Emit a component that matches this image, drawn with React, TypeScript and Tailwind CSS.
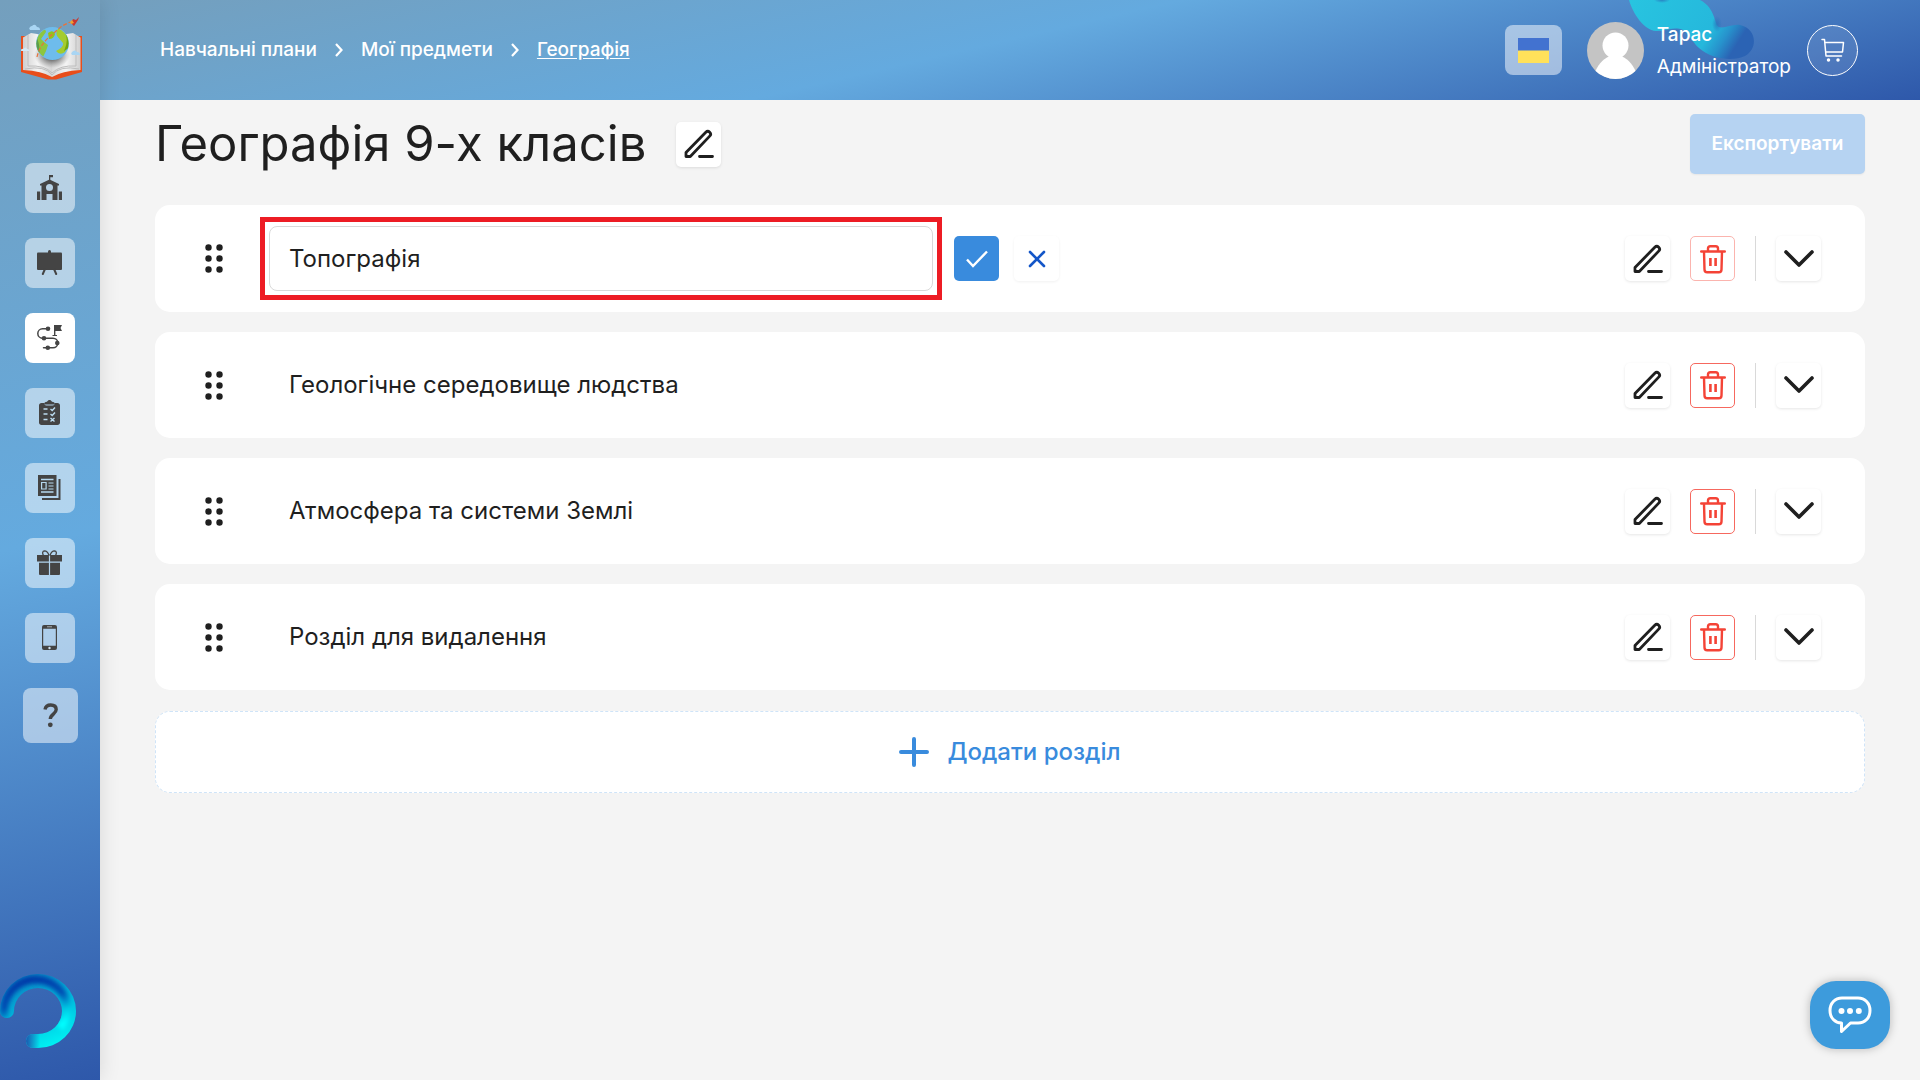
import { ReactNode, useState } from "react"
import clsx from "clsx"

type Section = { id: number; title: string }

const SECTIONS: Section[] = [
  { id: 1, title: "Топографія" },
  { id: 2, title: "Геологічне середовище людства" },
  { id: 3, title: "Атмосфера та системи Землі" },
  { id: 4, title: "Розділ для видалення" },
]

const SchoolIcon = () => (
  <svg viewBox="0 0 25 25" className="size-[25px]" fill="currentColor">
    <path d="M12 5V0h4v2.200h-2.700V5z" />
    <path
      fillRule="evenodd"
      d="M12.500 4.500 22 9v1.500h-1.500V25h-5v-6h-6v6h-5V10.500H3V9zM12.500 9a3.500 3.500 0 1 0 0 7 3.500 3.500 0 0 0 0-7z"
    />
    <path d="M0 16.500h3.200V25H0zM21.800 16.500H25V25h-3.200z" />
  </svg>
)

const BoardIcon = () => (
  <svg viewBox="0 0 25 25" className="size-[25px]" fill="currentColor">
    <rect x="11" y="0" width="3" height="5" rx="1.500" />
    <rect x="0" y="2.500" width="25" height="17.500" rx="1" />
    <path d="M8 19 5.800 24M17 19l2.200 5" stroke="currentColor" strokeWidth="2" strokeLinecap="round" />
  </svg>
)

const PathIcon = () => (
  <svg viewBox="0 0 25 25" className="size-[25px]" fill="currentColor">
    <path
      d="M11 3.800H5.500a4.600 4.600 0 0 0 0 9.400H16a4.800 4.800 0 0 1 0 9.600H6.500"
      fill="none"
      stroke="currentColor"
      strokeWidth="1.500"
      strokeLinecap="round"
    />
    <circle cx="11" cy="3.800" r="2.300" />
    <circle cx="7" cy="13.200" r="2.300" />
    <circle cx="20.300" cy="18" r="2.300" />
    <circle cx="10.800" cy="22.700" r="2.300" />
    <path d="M17 0h8l-1.500 3L25 6h-6.600v4h1.600v1h-4.500v-1H17z" />
  </svg>
)

const ClipboardIcon = () => (
  <svg viewBox="0 0 25 25" className="size-[25px]" fill="currentColor">
    <path d="M4.500 3h2.700c0 1.700.8 2.500 2.300 2.500h6c1.500 0 2.300-.8 2.300-2.500h2.700c1.400 0 2.500 1 2.500 2.500v17c0 1.500-1 2.500-2.500 2.500h-16C3 25 2 24 2 22.500v-17C2 4 3 3 4.500 3z" />
    <path d="M7 4.500c0-1.500 1-2.500 3-2.700C10.700.600 11.500 0 12.500 0s1.800.6 2.500 1.800c2 .2 3 1.200 3 2.700z" />
    <path
      d="M6.500 9h4M6.500 14h4M6.500 19.500h4M13.500 9l1.700 1.500L18 7.500M13.500 14l1.700 1.500 2.800-3M13.500 18l4 3.500m0-3.500-4 3.500"
      fill="none"
      stroke="#bcdcf0"
      strokeWidth="1.400"
    />
  </svg>
)

const NewsIcon = () => (
  <svg viewBox="0 0 25 25" className="size-[25px]">
    <path fill="currentColor" d="M1 0h18.500v21H1z" />
    <path d="M22.500 4v20H5" fill="none" stroke="currentColor" strokeWidth="2" />
    <path d="M4 4.500h12.500M4 17h12.500" stroke="#b5d7ee" strokeWidth="1.400" />
    <path d="M4.600 7.500h4.500v6.500H4.600zM11.500 8h5M11.500 11h5M11.500 14h5" fill="none" stroke="#b5d7ee" strokeWidth="1.200" />
  </svg>
)

const GiftIcon = () => (
  <svg viewBox="0 0 25 25" className="size-[25px]" fill="currentColor">
    <path
      d="M12 5.500C11 2.500 9.500.900 7.500.900 5.500 1 5 3 6.500 5.500M13 5.500c1-3 2.500-4.600 4.500-4.600 2 .1 2.500 2.100 1 4.600"
      fill="none"
      stroke="currentColor"
      strokeWidth="1.300"
    />
    <path d="M0 5h11.900v6.500H0zM13.100 5H25v6.500H13.100zM2 12.800h9.900V25H3a1 1 0 0 1-1-1zM13.100 12.800H23V24a1 1 0 0 1-1 1h-8.900z" />
  </svg>
)

const PhoneIcon = () => (
  <svg viewBox="0 0 25 25" className="size-[25px]">
    <path
      fill="currentColor"
      fillRule="evenodd"
      d="M7 0h11a2 2 0 0 1 2 2v21a2 2 0 0 1-2 2H7a2 2 0 0 1-2-2V2a2 2 0 0 1 2-2zM6.200 3.800v17h12.600v-17z"
    />
    <path d="M10 1.800h5" stroke="#a9aeb3" strokeWidth="1" />
    <circle cx="12.500" cy="23" r="1.200" fill="#d4e4f2" />
  </svg>
)

const QuestionIcon = () => (
  <svg viewBox="0 0 25 25" className="size-[25px]">
    <path
      d="M7 6.500C7.600 3.500 9.500 2 12.700 2c3.500 0 5.500 1.800 5.500 4.600 0 4.400-5.900 4.600-5.900 9.400"
      fill="none"
      stroke="currentColor"
      strokeWidth="3.400"
    />
    <circle cx="12.300" cy="21.800" r="2.400" fill="currentColor" />
  </svg>
)

const PencilIcon = () => (
  <svg viewBox="0 0 30 30" className="size-[30px]" fill="none" stroke="#1f1f1f" strokeWidth="2.800" strokeLinecap="round" strokeLinejoin="round">
    <path d="M2 27.500v-4L21.800 3.200c1.100-1.100 2.800-1.100 3.900 0s1.100 2.800 0 3.900L6.300 27.500zM15.500 27.500H28.500" />
  </svg>
)

const TrashIcon = () => (
  <svg viewBox="0 0 26 30" className="h-[30px] w-[26px]" fill="none" stroke="#f44336" strokeWidth="2.400" strokeLinecap="round" strokeLinejoin="round">
    <path d="M1.200 7.500h23.600M4 7.500l.5 18c0 1.800 1 2.700 2.700 2.700h11.600c1.700 0 2.700-.9 2.700-2.700l.5-18M8 7.200V4.500c0-1.500.8-2.300 2.300-2.300h5.400c1.500 0 2.300.8 2.300 2.300v2.700" />
    <path d="M10.400 14v8M15.600 14v8" strokeWidth="2.600" strokeLinecap="butt" />
  </svg>
)

const ChevronIcon = () => (
  <svg viewBox="0 0 30 18" className="h-[18px] w-[30px]" fill="none" stroke="#1f1f1f" strokeWidth="3.600" strokeLinecap="round" strokeLinejoin="round">
    <path d="m2 2 13 13L28 2" />
  </svg>
)

const CrumbArrow = () => (
  <svg viewBox="0 0 8 14" className="h-[14px] w-2" fill="none" stroke="white" strokeWidth="2.200">
    <path d="m1 1 5.500 6L1 13" />
  </svg>
)

const Logo = () => (
  <svg viewBox="0 0 84 84" className="size-[84px]">
    <defs>
      <linearGradient id="page-left" x1="0" x2="1">
        <stop offset="0" stopColor="#cfcfcf" />
        <stop offset=".5" stopColor="#f4f4f4" />
        <stop offset="1" stopColor="#d4d4d4" />
      </linearGradient>
      <linearGradient id="page-right" x1="1" x2="0">
        <stop offset="0" stopColor="#cfcfcf" />
        <stop offset=".5" stopColor="#f4f4f4" />
        <stop offset="1" stopColor="#dadada" />
      </linearGradient>
      <radialGradient id="globe-shadow">
        <stop offset=".3" stopColor="#555" stopOpacity=".9" />
        <stop offset="1" stopColor="#888" stopOpacity="0" />
      </radialGradient>
      <clipPath id="globe">
        <circle cx="42.500" cy="35.500" r="16" />
      </clipPath>
    </defs>
    <path d="M11 28h61v36l-26 7.500h-8L11 64z" fill="#e84e1b" />
    <path d="M13 29.500 21 25q13 1 21 9v35q-10-6-29-7z" fill="url(#page-left)" />
    <path d="M70.500 29.500 63 25q-13 1-21 9v35q10-6 28.500-7z" fill="url(#page-right)" />
    <path d="M15 61q20-4 27 6 8-10 27-6M18 27v31q17-1 24 7 8-8 24-7V27" fill="none" stroke="#bdbdbd" strokeWidth="1" />
    <ellipse cx="42" cy="47" rx="18" ry="13" fill="url(#globe-shadow)" />
    <circle cx="42.500" cy="35.500" r="16.500" fill="#6ebcec" />
    <g clipPath="url(#globe)">
      <path d="M26 26q9-9 10-2l-5 7q4 4 7 6l-2 6-4 8-8-7z" fill="#8dc63f" />
      <path d="M24 26q7 8 5 22l-6-4z" fill="#5d9c4a" />
      <path d="M50 19q-5 4-3 9l6 7q1 4-7 8 4 5 9 1l6-15z" fill="#a4cc2e" />
      <path d="M53 21q7 10 1 22l5-3 3-12z" fill="#74a80c" />
      <path d="M38 25q5-4 7 1-1 5-6 5z" fill="#94c21b" />
    </g>
    <path d="M27 49q2-10 11-19l14-12 8-4" fill="none" stroke="#e8723a" strokeWidth="1.200" strokeDasharray="4 2" />
    <path d="m61 15 2-4 3 1 3-3-1 3-2 3-2 3z" fill="#c9362f" />
    <path d="m60 14 2-2 2 3-3 1z" fill="#f0a030" />
    <g fill="#a9d5f3">
      <path d="M20 22a2 2 0 0 1 0-3q1-1 2-1 3-3 5 1 3 0 3 3z" />
      <path d="M62 47a2 2 0 0 1 0-3q3-3 5 0 3 0 3 3z" />
    </g>
    <path d="M11 43q0-3 2-2 3-3 4 0 3 0 2 2z" fill="#d3e9f7" />
  </svg>
)

const Ring = () => (
  <svg viewBox="0 0 76 76" className="h-[76px] w-[76px]" fill="none">
    <defs>
      <linearGradient id="ring-edge" x1=".3" y1="0" x2=".7" y2="1">
        <stop offset="0" stopColor="#0a7cc0" />
        <stop offset=".5" stopColor="#00b8dc" />
        <stop offset="1" stopColor="#00f4f4" />
      </linearGradient>
      <linearGradient id="ring-core" x1=".3" y1="0" x2=".65" y2="1">
        <stop offset="0" stopColor="#0338a8" />
        <stop offset=".45" stopColor="#0450b4" />
        <stop offset=".75" stopColor="#00c8e4" />
        <stop offset="1" stopColor="#00ffff" />
      </linearGradient>
      <linearGradient id="ring-tip" x1="0" x2="1">
        <stop offset="0" stopColor="#1c58b0" />
        <stop offset="1" stopColor="#1c58b0" stopOpacity="0" />
      </linearGradient>
      <filter id="ring-soft" x="-20%" y="-20%" width="140%" height="140%">
        <feGaussianBlur stdDeviation="2" />
      </filter>
      <clipPath id="ring-shape">
        <path d="M0 39A38 37 0 1 1 38 76h-5a7 7 0 0 1 0-14h5A24 23 0 1 0 14 39a7 7 0 0 1-14 0z" />
      </clipPath>
    </defs>
    <g clipPath="url(#ring-shape)">
      <path fill="url(#ring-edge)" d="M0 0h76v76H0z" />
      <path d="M4 46V39A32 32 0 0 1 64 24Q71 42 60 56" stroke="url(#ring-core)" strokeWidth="8" filter="url(#ring-soft)" />
      <path fill="url(#ring-tip)" d="M26 62h14v14H26z" />
    </g>
  </svg>
)

const Squiggle = () => (
  <svg viewBox="0 0 130 60" className="absolute top-0 right-[164px] h-[60px] w-[130px]">
    <defs>
      <linearGradient id="tube" x1="0" y1="0" x2="1" y2=".3">
        <stop offset="0" stopColor="#28c4e0" />
        <stop offset=".75" stopColor="#25b8dc" />
        <stop offset=".88" stopColor="#2792cc" />
        <stop offset="1" stopColor="#2b63b4" />
      </linearGradient>
      <radialGradient id="tube-fold">
        <stop offset="0" stopColor="#2874bc" stopOpacity=".8" />
        <stop offset="1" stopColor="#2874bc" stopOpacity="0" />
      </radialGradient>
    </defs>
    <path
      d="M3 0C7 14 18 30 30 31c10 0 18-5 27-1 6 3 9 12 16 18 12 11 34 14 46 8 14-8 11-28-5-31-8-1-16 4-21 2C88 25 90 8 74 0z"
      fill="url(#tube)"
    />
    <ellipse cx="36" cy="0" rx="8" ry="3" fill="url(#tube-fold)" />
    <ellipse cx="48" cy="32" rx="13" ry="4" fill="url(#tube-fold)" />
    <ellipse cx="91" cy="24" rx="5" ry="8" fill="url(#tube-fold)" />
  </svg>
)

const NAV = [
  { label: "Школа", icon: <SchoolIcon /> },
  { label: "Класи", icon: <BoardIcon /> },
  { label: "Навчальні плани", icon: <PathIcon />, active: true },
  { label: "Завдання", icon: <ClipboardIcon /> },
  { label: "Новини", icon: <NewsIcon /> },
  { label: "Подарунки", icon: <GiftIcon /> },
  { label: "Мобільний застосунок", icon: <PhoneIcon /> },
]

function IconButton({
  label,
  className,
  onClick,
  children,
}: {
  label: string
  className?: string
  onClick?: () => void
  children: ReactNode
}) {
  return (
    <button
      type="button"
      aria-label={label}
      onClick={onClick}
      className={clsx("flex size-[45px] shrink-0 items-center justify-center rounded-[5px]", className)}
    >
      {children}
    </button>
  )
}

function Sidebar() {
  return (
    <aside className="z-10 flex w-[100px] shrink-0 flex-col items-center bg-[linear-gradient(167deg,#749fbd_0%,#64aadf_50%,#2e58aa_100%)] pb-8 shadow-[0_0_20px_rgba(0,0,0,0.12)]">
      <a href="#" aria-label="Головна" className="mt-2 ml-1">
        <Logo />
      </a>
      <nav className="mt-[71px] flex flex-col items-center gap-[25px] text-[#444]">
        {NAV.map((item) => (
          <a
            key={item.label}
            href="#"
            aria-label={item.label}
            className={clsx(
              "flex size-[50px] items-center justify-center rounded-lg pr-px pb-px",
              item.active ? "bg-white" : "bg-white/50"
            )}
          >
            {item.icon}
          </a>
        ))}
        <a
          href="#"
          aria-label="Допомога"
          className="flex size-[55px] items-center justify-center rounded-lg bg-white/50"
        >
          <QuestionIcon />
        </a>
      </nav>
      <div className="mt-auto self-start">
        <Ring />
      </div>
    </aside>
  )
}

function Header() {
  return (
    <header className="relative flex h-[100px] items-center bg-[linear-gradient(167deg,#749fbd_0%,#64aadf_48%,#2e58aa_100%)] pr-[62px] pl-[60px] text-white">
      <Squiggle />
      <nav className="flex items-center gap-[18px] text-[19px] font-medium">
        <a href="#">Навчальні плани</a>
        <CrumbArrow />
        <a href="#">Мої предмети</a>
        <CrumbArrow />
        <a href="#" className="underline underline-offset-2">
          Географія
        </a>
      </nav>
      <div className="relative ml-auto flex items-center">
        <button
          type="button"
          aria-label="Українська"
          className="flex h-[50px] w-[57px] items-center justify-center rounded-lg bg-white/50"
        >
          <span className="h-[25px] w-[31px] bg-[linear-gradient(#4272d0_46%,#ffe15a_54%)]" />
        </button>
        <svg viewBox="0 0 57 57" className="ml-[25px] size-[57px]">
          <clipPath id="avatar">
            <circle cx="28.500" cy="28.500" r="28.500" />
          </clipPath>
          <g clipPath="url(#avatar)">
            <path fill="#c4c4c4" d="M0 0h57v57H0z" />
            <circle cx="28.500" cy="23.500" r="13" fill="white" />
            <path fill="white" d="M8 50c4-9 10-15 16-16h9c6 1 12 7 16 16v8H8z" />
          </g>
        </svg>
        <div className="ml-[13px] flex flex-col gap-1 pt-0.5 text-[19px] leading-7">
          <span className="font-medium">Тарас</span>
          <span>Адміністратор</span>
        </div>
        <button
          type="button"
          aria-label="Кошик"
          className="ml-4 flex size-[51px] items-center justify-center rounded-full border border-white bg-white/10"
        >
          <svg viewBox="0 0 24 24" className="size-6" fill="none" stroke="white" strokeWidth="1.500" strokeLinecap="round" strokeLinejoin="round">
            <path d="M1 1.500h2.500l1.500 16.500h15.500M4 4.500h18.500l-1 9.500H4.800" />
            <circle cx="7.500" cy="22" r="1" fill="white" />
            <circle cx="17" cy="22" r="1" fill="white" />
          </svg>
        </button>
      </div>
    </header>
  )
}

function SectionRow({ section, editing, onClose }: { section: Section; editing: boolean; onClose: () => void }) {
  const [title, setTitle] = useState(section.title)

  return (
    <li className="flex min-h-[106px] items-center rounded-[15px] bg-white py-3 pr-11 pl-[50px]">
      <button type="button" aria-label="Перемістити" className="cursor-grab">
        <svg viewBox="0 0 18 29" className="h-[29px] w-[18px]" fill="#1f1f1f">
          <circle cx="3.500" cy="3.500" r="3.200" />
          <circle cx="14.500" cy="3.500" r="3.200" />
          <circle cx="3.500" cy="14.500" r="3.200" />
          <circle cx="14.500" cy="14.500" r="3.200" />
          <circle cx="3.500" cy="25.500" r="3.200" />
          <circle cx="14.500" cy="25.500" r="3.200" />
        </svg>
      </button>
      {editing ? (
        <div className="ml-[37px] flex flex-1 items-center">
          <div className="w-[682px] border-5 border-[#ed1c24] p-1">
            <input
              type="text"
              aria-label="Назва розділу"
              value={title}
              onChange={(e) => setTitle(e.target.value)}
              className="block h-[65px] w-full rounded-lg border border-[#d9d9d9] px-[19px] text-2xl outline-none"
            />
          </div>
          <IconButton label="Зберегти" className="ml-3 bg-[#398bdd]" onClick={onClose}>
            <svg viewBox="0 0 22 18" className="h-[18px] w-[22px]" fill="none" stroke="white" strokeWidth="2.400">
              <path d="m1 9.500 6 6.500L21 1.500" />
            </svg>
          </IconButton>
          <IconButton label="Скасувати" className="ml-[15px] shadow-[0_1px_3px_rgba(0,0,0,0.06)]" onClick={onClose}>
            <svg viewBox="0 0 18 18" className="size-[18px]" stroke="#1456c8" strokeWidth="2.600" strokeLinecap="round">
              <path d="m2 2 14 14M16 2 2 16" />
            </svg>
          </IconButton>
        </div>
      ) : (
        <p className="ml-[66px] flex-1 text-2xl">{title}</p>
      )}
      <IconButton label="Редагувати" className="shadow-[0_1px_3px_rgba(0,0,0,0.1)]">
        <PencilIcon />
      </IconButton>
      <IconButton
        label="Видалити"
        className={clsx("ml-5 border", editing ? "border-[#fbb4ae]" : "border-[#f6685e]")}
      >
        <TrashIcon />
      </IconButton>
      <span className="ml-5 h-[45px] w-px bg-[#d9d9d9]" />
      <IconButton label="Розгорнути" className="ml-5 shadow-[0_1px_3px_rgba(0,0,0,0.1)]">
        <ChevronIcon />
      </IconButton>
    </li>
  )
}

export default function App() {
  const [editingId, setEditingId] = useState<number | null>(1)

  return (
    <div className="flex min-h-screen bg-[#f4f4f4] font-['Inter',sans-serif] text-[#1f1f1f]">
      <Sidebar />
      <div className="min-w-0 flex-1">
        <Header />
        <main className="px-[55px] pt-[14px]">
          <div className="flex items-center">
            <h1 className="text-[49px] leading-[60px]">Географія 9-х класів</h1>
            <IconButton label="Редагувати назву" className="ml-[30px] bg-white shadow-[0_1px_3px_rgba(0,0,0,0.1)]">
              <PencilIcon />
            </IconButton>
            <button
              type="button"
              disabled
              className="ml-auto h-[60px] w-[175px] rounded-[5px] bg-[#b6d3f2] text-[19px] font-semibold text-white shadow-[0_1px_2px_rgba(0,0,0,0.06)]"
            >
              Експортувати
            </button>
          </div>
          <ul className="mt-[31px] flex flex-col gap-5">
            {SECTIONS.map((section) => (
              <SectionRow
                key={section.id}
                section={section}
                editing={section.id === editingId}
                onClose={() => setEditingId(null)}
              />
            ))}
          </ul>
          <button
            type="button"
            className="mt-[21px] flex h-[82px] w-full items-center justify-center gap-[18px] rounded-[15px] border border-dashed border-[#cfe4f8] bg-white text-2xl font-medium text-[#398bdd]"
          >
            <svg viewBox="0 0 30 30" className="size-[30px]" stroke="currentColor" strokeWidth="4" strokeLinecap="round">
              <path d="M15 2v26M2 15h26" />
            </svg>
            Додати розділ
          </button>
        </main>
      </div>
      <button
        type="button"
        aria-label="Чат"
        className="fixed right-[30px] bottom-[31px] flex h-[68px] w-20 items-center justify-center rounded-[26px] bg-[#3d9bdc] shadow-[0_0_10px_rgba(0,0,0,0.25)]"
      >
        <svg viewBox="0 0 44 38" className="h-[38px] w-11" fill="none" stroke="white" strokeWidth="3" strokeLinejoin="round">
          <path d="M14 2h16c7 0 12 5 12 12.500S37 27 30 27h-7.500l-9 8.500V27C7 27 2 22 2 14.500S7 2 14 2z" />
          <g fill="white" stroke="none">
            <circle cx="13.500" cy="15" r="3" />
            <circle cx="22" cy="15" r="3" />
            <circle cx="30.800" cy="15" r="3" />
          </g>
        </svg>
      </button>
    </div>
  )
}
